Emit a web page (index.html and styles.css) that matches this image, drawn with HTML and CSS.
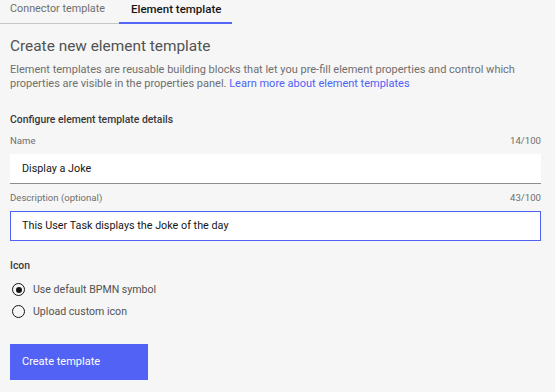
FILE: index.html
```html
<!DOCTYPE html>
<html>
<head>
<meta charset="utf-8">
<link rel="stylesheet" href="styles.css">
</head>
<body>
<div class="page">
  <div class="tabs">
    <div class="tab">Connector template</div>
    <div class="tab active">Element template</div>
  </div>
  <div class="content">
    <h1 class="title">Create new element template</h1>
    <p class="intro">Element templates are reusable building blocks that let you pre-fill element properties and control which properties are visible in the properties panel. <a class="link" href="#">Learn more about element templates</a></p>
    <h2 class="section">Configure element template details</h2>
    <div class="field">
      <div class="field-head"><span>Name</span><span>14/100</span></div>
      <div class="input">Display a Joke</div>
    </div>
    <div class="field">
      <div class="field-head"><span>Description (optional)</span><span>43/100</span></div>
      <div class="input focus">This User Task displays the Joke of the day</div>
    </div>
    <h2 class="section icon-title">Icon</h2>
    <div class="radios">
      <div class="radio"><span class="dot checked"></span><span>Use default BPMN symbol</span></div>
      <div class="radio"><span class="dot"></span><span>Upload custom icon</span></div>
    </div>
    <button class="btn">Create template</button>
  </div>
</div>
</body>
</html>
```
FILE: styles.css
```css
* { box-sizing: border-box; }
html, body { margin: 0; padding: 0; }
body {
  background: #f6f6f6;
  font-family: Roboto, "Noto Sans", sans-serif;
  color: #525252;
  width: 555px;
  height: 392px;
  overflow: hidden;
}
.tabs {
  display: flex;
  height: 24px;
}
.tab {
  width: 119px;
  padding: 0 0 0 10px;
  font-size: 10.8px;
  line-height: 18px;
  white-space: nowrap;
  color: #6f6f6f;
  border-bottom: 1px solid #c6c6c6;
  height: 24px;
}
.tab.active {
  width: 113px;
  padding-left: 12px;
  font-size: 11.5px;
  color: #161616;
  font-weight: 500;
  border-bottom: 2px solid #5464f4;
}
.content {
  padding: 0 14px 0 10px;
}
.title {
  margin: 12px 0 0;
  font-size: 15.4px;
  font-weight: 400;
  line-height: 20px;
  color: #525252;
}
.intro {
  margin: 7px 0 0;
  font-size: 11px;
  line-height: 14.3px;
  color: #6f6f6f;
}
.link { color: #4f62f5; text-decoration: none; }
.section {
  margin: 20px 0 0;
  font-size: 10.4px;
  font-weight: 500;
  line-height: 16px;
  color: #393939;
}
.field { margin-top: 6px; }
.field + .field { margin-top: 7px; }
.field-head {
  display: flex;
  justify-content: space-between;
  font-size: 9.6px;
  line-height: 14px;
  color: #6f6f6f;
  margin-bottom: 6px;
}
.input {
  height: 30px;
  background: #fff;
  border-bottom: 1px solid #8d8d8d;
  padding: 0 12px;
  font-size: 10.8px;
  line-height: 29px;
  color: #161616;
}
.input.focus {
  border: 1px solid #4f62f5;
  padding: 0 11px;
  line-height: 28px;
}
.icon-title { margin-top: 17px; }
.radios { margin-top: 8px; display: flex; flex-direction: column; gap: 6px; }
.radio {
  display: flex;
  align-items: center;
  gap: 8px;
  font-size: 10.6px;
  line-height: 16px;
  color: #525252;
  padding-left: 2px;
}
.dot {
  width: 13px;
  height: 13px;
  border: 1px solid #161616;
  border-radius: 50%;
  position: relative;
  flex: none;
}
.dot.checked::after {
  content: "";
  position: absolute;
  left: 2.5px;
  top: 2.5px;
  width: 6px;
  height: 6px;
  border-radius: 50%;
  background: #161616;
}
.btn {
  margin-top: 24px;
  width: 138px;
  height: 36px;
  background: #5262f5;
  border: none;
  color: #fff;
  font-family: inherit;
  font-size: 11px;
  text-align: left;
  padding: 0 12px;
}
```
